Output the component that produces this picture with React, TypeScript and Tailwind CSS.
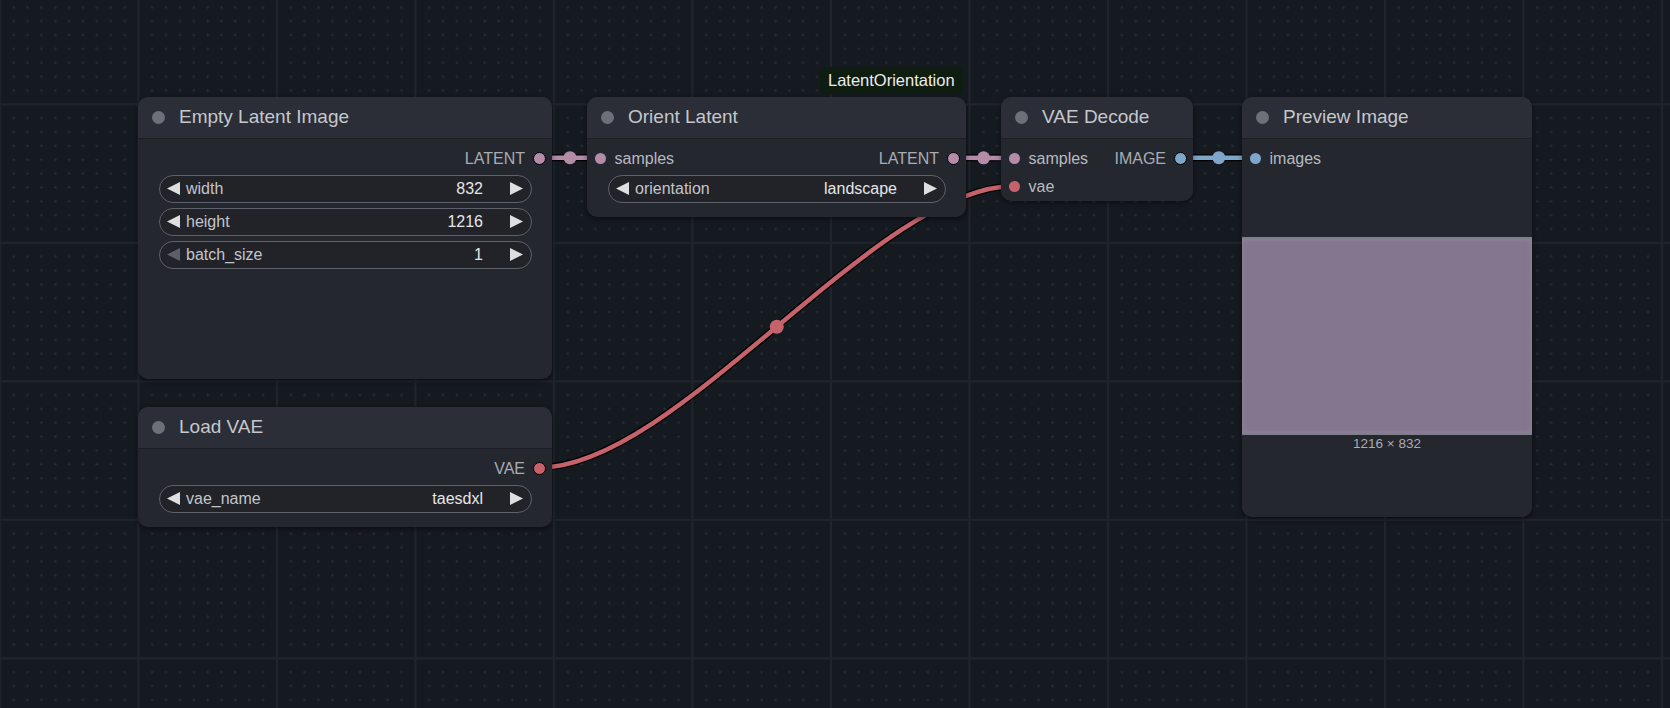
import React from "react";

type SlotProps = { label: string; dot: string; text?: string };

const minor = Array.from({ length: 9 }, (_, i) => 1 + 13.85 * (i + 1));

function Tri({ dir, dim }: { dir: "left" | "right"; dim?: boolean }) {
  return (
    <svg width="13" height="13" viewBox="0 0 13 13" className="shrink-0">
      <polygon
        points={dir === "left" ? "13,0 13,13 0,6.5" : "0,0 0,13 13,6.5"}
        fill={dim ? "#5c5f66" : "#dedfe1"}
      />
    </svg>
  );
}

function Widget({ label, value, dimLeft }: { label: string; value: string; dimLeft?: boolean }) {
  return (
    <div className="ml-[21px] mr-[20px] flex h-[28px] items-center rounded-full border border-[#5d616b] bg-[#212329] pl-[7px] pr-[8px] text-[16px]">
      <Tri dir="left" dim={dimLeft} />
      <span className="ml-[6px] text-[#c3c5ca]">{label}</span>
      <span className="ml-auto mr-[27px] text-[#e6e6e6]">{value}</span>
      <Tri dir="right" />
    </div>
  );
}

function InSlot({ label, dot }: SlotProps) {
  return (
    <div className="flex items-center">
      <span className={`ml-[7.5px] h-[11px] w-[11px] rounded-full ${dot}`} />
      <span className="ml-[9px] text-[16px] text-[#b7bac0]">{label}</span>
    </div>
  );
}

function OutSlot({ label, dot }: SlotProps) {
  return (
    <div className="ml-auto flex items-center">
      <span className="mr-[8px] text-[16px] text-[#a9acb3]">{label}</span>
      <span className={`mr-[6px] h-[13px] w-[13px] rounded-full border-[1.5px] border-black ${dot}`} />
    </div>
  );
}

function Node({
  title,
  className,
  children,
}: {
  title: string;
  className: string;
  children?: React.ReactNode;
}) {
  return (
    <div
      className={`absolute flex flex-col rounded-[10px] bg-[#24272e] shadow-[0_2px_5px_rgba(0,0,0,0.45)] ${className}`}
    >
      <div className="flex h-[42px] shrink-0 items-center rounded-t-[10px] border-b border-[#1c1f25] bg-[#2b2e36] pl-[14px]">
        <span className="h-[13px] w-[13px] rounded-full bg-[#6b707a]" />
        <span className="ml-[14px] text-[19px] text-[#c4c7cd]">{title}</span>
      </div>
      <div className="flex flex-col pt-[5.5px]">{children}</div>
    </div>
  );
}

function Wire({ d, color }: { d: string; color: string }) {
  return (
    <g fill="none">
      <path d={d} stroke="#000" strokeWidth="7" />
      <path d={d} stroke={color} strokeWidth="4.5" />
    </g>
  );
}

export default function App() {
  const pink = "#b58ca8";
  const red = "#c6626c";
  const blue = "#7da6ca";

  return (
    <div className="relative h-[708px] w-[1670px] overflow-hidden bg-[#151920] font-['Liberation_Sans',Arial,sans-serif]">
      {/* canvas grid + links */}
      <svg className="absolute inset-0" width="1670" height="708">
        <defs>
          <pattern id="grid" x="137.4" y="103.3" width="138.5" height="138.5" patternUnits="userSpaceOnUse">
            <rect x="0" y="0" width="2" height="138.5" fill="#20242c" />
            <rect x="0" y="0" width="138.5" height="2" fill="#20242c" />
            {minor.map((cx) =>
              minor.map((cy) => (
                <g key={`${cx}-${cy}`} fill="#282c35">
                  <rect x={cx - 1.5} y={cy - 0.5} width="3" height="1" />
                  <rect x={cx - 0.5} y={cy - 1.5} width="1" height="3" />
                </g>
              )),
            )}
          </pattern>
        </defs>
        <rect width="1670" height="708" fill="url(#grid)" />

        <Wire d="M540 157.7 L600 157.7" color={pink} />
        <circle cx="570" cy="157.7" r="6.5" fill={pink} />

        <Wire d="M953 157.7 L1014 158" color={pink} />
        <circle cx="983.6" cy="157.8" r="6.5" fill={pink} />

        <Wire d="M1181.7 157.7 L1256 157.7" color={blue} />
        <circle cx="1218.8" cy="157.7" r="6.5" fill={blue} />

        <Wire d="M539.3 467.5 C677.3 467.5 876.3 186 1014.3 186" color={red} />
        <circle cx="776.8" cy="326.7" r="7" fill={red} />
      </svg>

      <div className="absolute left-[820px] top-[67px] flex h-[27px] items-center rounded-[6px] bg-[#0f1c10] px-[8px] text-[16.5px] text-[#ececec]">
        LatentOrientation
      </div>

      <Node title="Empty Latent Image" className="left-[138px] top-[97px] h-[282px] w-[414px]">
        <div className="flex h-[28px] items-center">
          <OutSlot label="LATENT" dot="bg-[#b58ca8]" />
        </div>
        <div className="mt-[2px] flex flex-col gap-[5px]">
          <Widget label="width" value="832" />
          <Widget label="height" value="1216" />
          <Widget label="batch_size" value="1" dimLeft />
        </div>
      </Node>

      <Node title="Load VAE" className="left-[138px] top-[407px] h-[120px] w-[414px]">
        <div className="flex h-[28px] items-center">
          <OutSlot label="VAE" dot="bg-[#c6626c]" />
        </div>
        <div className="mt-[2px]">
          <Widget label="vae_name" value="taesdxl" />
        </div>
      </Node>

      <Node title="Orient Latent" className="left-[587px] top-[97px] h-[120px] w-[379px]">
        <div className="flex h-[28px] items-center">
          <InSlot label="samples" dot="bg-[#b58ca8]" />
          <OutSlot label="LATENT" dot="bg-[#b58ca8]" />
        </div>
        <div className="mt-[2px]">
          <Widget label="orientation" value="landscape" />
        </div>
      </Node>

      <Node title="VAE Decode" className="left-[1001px] top-[97px] h-[104px] w-[192px]">
        <div className="flex h-[28px] items-center">
          <InSlot label="samples" dot="bg-[#b58ca8]" />
          <OutSlot label="IMAGE" dot="bg-[#7da6ca]" />
        </div>
        <div className="flex h-[28px] items-center">
          <InSlot label="vae" dot="bg-[#c6626c]" />
        </div>
      </Node>

      <Node title="Preview Image" className="left-[1242px] top-[97px] h-[420px] w-[290px]">
        <div className="flex h-[28px] items-center">
          <InSlot label="images" dot="bg-[#7da6ca]" />
        </div>
        <div className="mt-[64px] h-[198px] border-y-2 border-[#7e7f89] bg-[#85768f] shadow-[inset_0_0_6px_rgba(160,150,175,0.5)]" />
        <div className="mt-[1px] text-center text-[13.5px] leading-[16px] text-[#a9acb3]">1216 × 832</div>
      </Node>
    </div>
  );
}
